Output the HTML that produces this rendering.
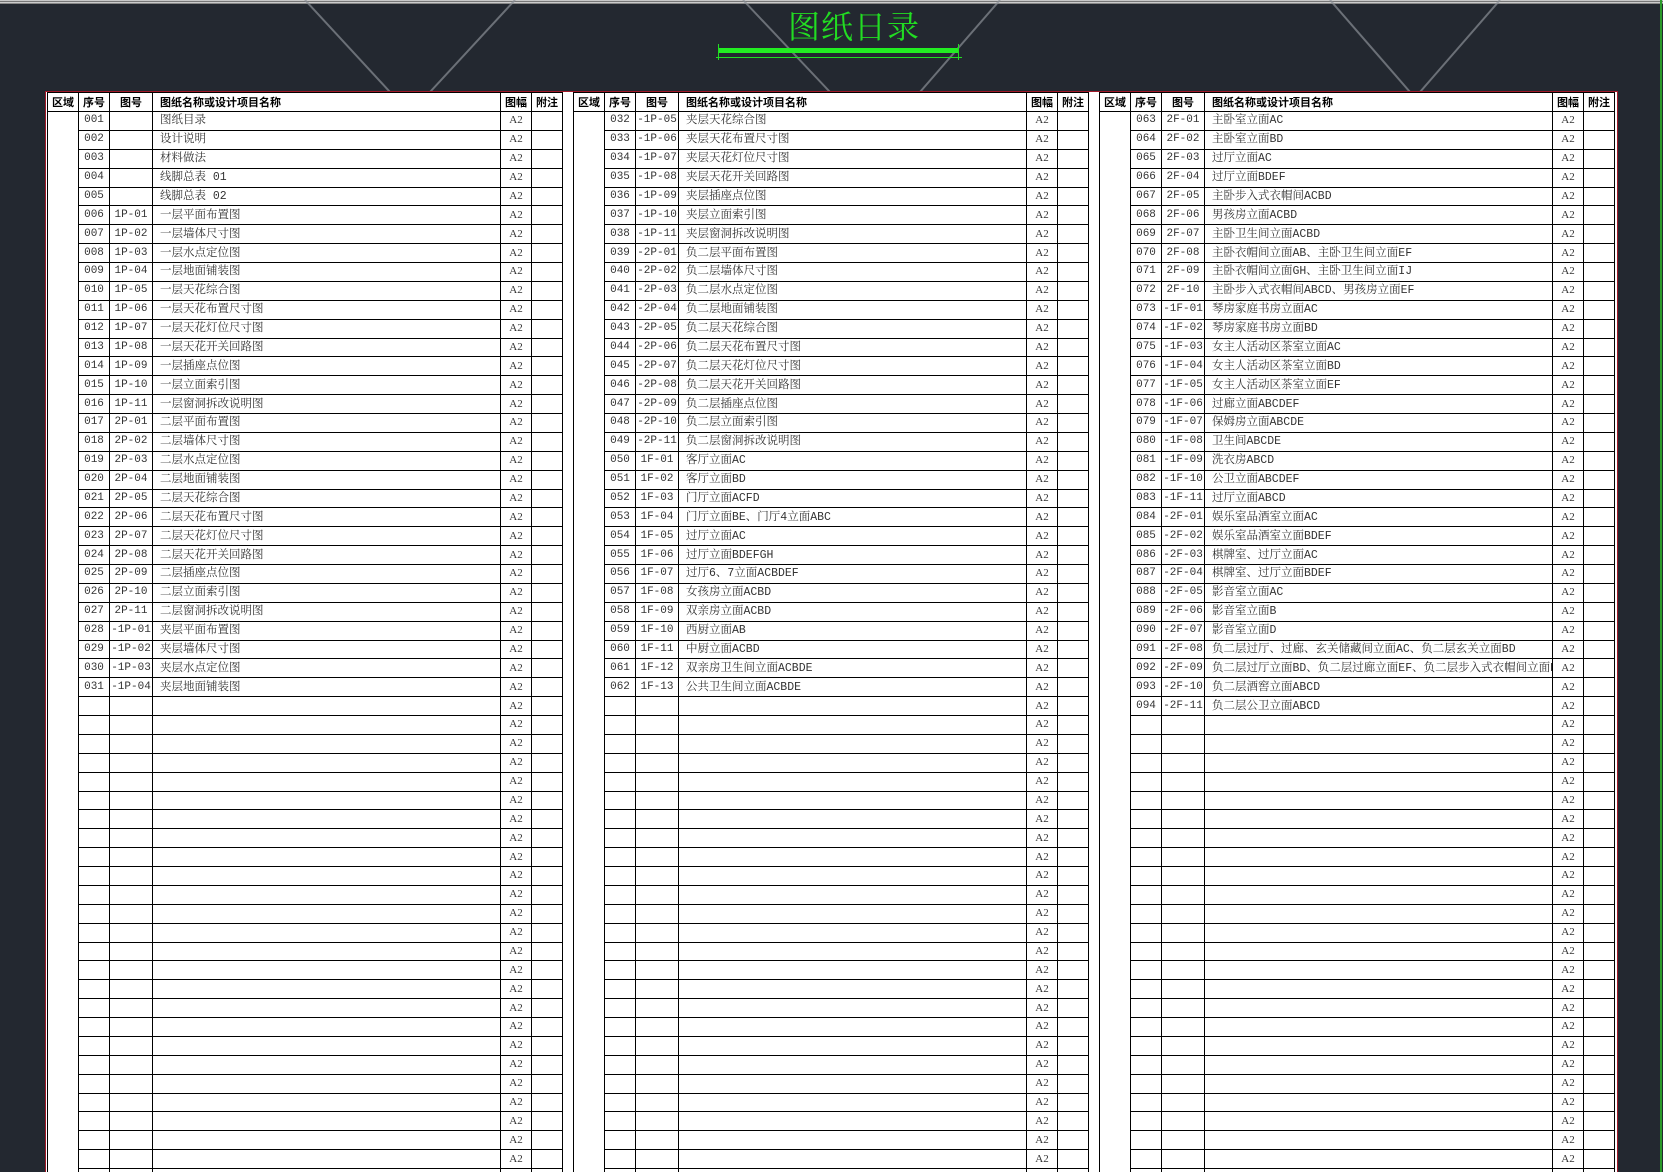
<!DOCTYPE html>
<html><head><meta charset="utf-8"><style>
html,body{margin:0;padding:0;width:1663px;height:1172px;overflow:hidden;background:#232830;}
body{position:relative;font-family:"Liberation Mono","Noto Serif CJK SC",monospace;}
.top{position:absolute;left:0;top:0;width:1663px;height:4px;background:linear-gradient(#c8c8c8 0,#c8c8c8 1px,#777 1px,#777 2px,#ccc 2px,#ccc 3px,#888 3px);}
.title{position:absolute;left:788px;top:2px;font-family:"Noto Serif CJK SC",serif;font-size:32px;color:#22dd22;letter-spacing:1px;}
.bar{position:absolute;left:718px;top:48px;width:240px;height:5px;background:#22ee22;}
.thin{position:absolute;left:716px;top:57px;width:246px;height:1px;background:#22dd22;}
.tick{position:absolute;top:44px;width:1px;height:16px;background:#22dd22;}
.green{position:absolute;left:1660px;top:0;width:2px;height:1172px;background:#2a9a2a;}
.clip{position:absolute;left:0;top:0;width:1663px;height:1172px;overflow:hidden;}
.page{position:absolute;left:45px;top:91px;width:1571px;height:1100px;background:#fff;border:1px solid #a01828;border-bottom:none;}
table{position:absolute;top:92px;border-collapse:collapse;table-layout:fixed;width:515px;font-size:11px;color:#333;}
td{border:1px solid #000;height:17.88px;padding:0;white-space:nowrap;overflow:hidden;line-height:17px;}
th{border:1px solid #000;height:18px;padding:0;font-family:"Noto Sans CJK SC",sans-serif;font-weight:bold;font-size:11px;color:#000;text-align:center;line-height:17px;}
th.n{text-align:left;padding-left:7px;}
td:nth-child(1){border-top:none;border-bottom:none;}
td:nth-child(2),td:nth-child(3){text-align:center;}
td:nth-child(4){padding-left:7px;text-align:left;font-family:"Liberation Mono","Noto Serif CJK SC",serif;font-size:11.5px;}
td:nth-child(5){text-align:center;font-family:"Liberation Serif",serif;}
</style></head><body>
<div class="clip">
<div class="top"></div>
<svg style="position:absolute;left:0;top:0" width="1663" height="92"><g stroke="#8a8f96" stroke-width="2" opacity="0.7"><line x1="305" y1="0" x2="390" y2="92"/><line x1="515" y1="0" x2="430" y2="92"/><line x1="743" y1="0" x2="830" y2="92"/><line x1="1000" y1="0" x2="920" y2="92"/><line x1="1330" y1="0" x2="1410" y2="92"/><line x1="1500" y1="0" x2="1420" y2="92"/></g></svg>
<div class="title">图纸日录</div>
<div class="bar"></div><div class="thin"></div><div class="tick" style="left:718px"></div><div class="tick" style="left:958px"></div>
<div class="green"></div>
<div class="page"></div>

<table style="left:47px"><colgroup><col style="width:31px"><col style="width:31px"><col style="width:43px"><col style="width:348px"><col style="width:31px"><col style="width:31px"></colgroup>
<tr><th>区域</th><th>序号</th><th>图号</th><th class="n">图纸名称或设计项目名称</th><th>图幅</th><th>附注</th></tr>
<tr><td></td><td>001</td><td></td><td>图纸目录</td><td>A2</td><td></td></tr>
<tr><td></td><td>002</td><td></td><td>设计说明</td><td>A2</td><td></td></tr>
<tr><td></td><td>003</td><td></td><td>材料做法</td><td>A2</td><td></td></tr>
<tr><td></td><td>004</td><td></td><td>线脚总表 01</td><td>A2</td><td></td></tr>
<tr><td></td><td>005</td><td></td><td>线脚总表 02</td><td>A2</td><td></td></tr>
<tr><td></td><td>006</td><td>1P-01</td><td>一层平面布置图</td><td>A2</td><td></td></tr>
<tr><td></td><td>007</td><td>1P-02</td><td>一层墙体尺寸图</td><td>A2</td><td></td></tr>
<tr><td></td><td>008</td><td>1P-03</td><td>一层水点定位图</td><td>A2</td><td></td></tr>
<tr><td></td><td>009</td><td>1P-04</td><td>一层地面铺装图</td><td>A2</td><td></td></tr>
<tr><td></td><td>010</td><td>1P-05</td><td>一层天花综合图</td><td>A2</td><td></td></tr>
<tr><td></td><td>011</td><td>1P-06</td><td>一层天花布置尺寸图</td><td>A2</td><td></td></tr>
<tr><td></td><td>012</td><td>1P-07</td><td>一层天花灯位尺寸图</td><td>A2</td><td></td></tr>
<tr><td></td><td>013</td><td>1P-08</td><td>一层天花开关回路图</td><td>A2</td><td></td></tr>
<tr><td></td><td>014</td><td>1P-09</td><td>一层插座点位图</td><td>A2</td><td></td></tr>
<tr><td></td><td>015</td><td>1P-10</td><td>一层立面索引图</td><td>A2</td><td></td></tr>
<tr><td></td><td>016</td><td>1P-11</td><td>一层窗洞拆改说明图</td><td>A2</td><td></td></tr>
<tr><td></td><td>017</td><td>2P-01</td><td>二层平面布置图</td><td>A2</td><td></td></tr>
<tr><td></td><td>018</td><td>2P-02</td><td>二层墙体尺寸图</td><td>A2</td><td></td></tr>
<tr><td></td><td>019</td><td>2P-03</td><td>二层水点定位图</td><td>A2</td><td></td></tr>
<tr><td></td><td>020</td><td>2P-04</td><td>二层地面铺装图</td><td>A2</td><td></td></tr>
<tr><td></td><td>021</td><td>2P-05</td><td>二层天花综合图</td><td>A2</td><td></td></tr>
<tr><td></td><td>022</td><td>2P-06</td><td>二层天花布置尺寸图</td><td>A2</td><td></td></tr>
<tr><td></td><td>023</td><td>2P-07</td><td>二层天花灯位尺寸图</td><td>A2</td><td></td></tr>
<tr><td></td><td>024</td><td>2P-08</td><td>二层天花开关回路图</td><td>A2</td><td></td></tr>
<tr><td></td><td>025</td><td>2P-09</td><td>二层插座点位图</td><td>A2</td><td></td></tr>
<tr><td></td><td>026</td><td>2P-10</td><td>二层立面索引图</td><td>A2</td><td></td></tr>
<tr><td></td><td>027</td><td>2P-11</td><td>二层窗洞拆改说明图</td><td>A2</td><td></td></tr>
<tr><td></td><td>028</td><td>-1P-01</td><td>夹层平面布置图</td><td>A2</td><td></td></tr>
<tr><td></td><td>029</td><td>-1P-02</td><td>夹层墙体尺寸图</td><td>A2</td><td></td></tr>
<tr><td></td><td>030</td><td>-1P-03</td><td>夹层水点定位图</td><td>A2</td><td></td></tr>
<tr><td></td><td>031</td><td>-1P-04</td><td>夹层地面铺装图</td><td>A2</td><td></td></tr>
<tr><td></td><td></td><td></td><td></td><td>A2</td><td></td></tr><tr><td></td><td></td><td></td><td></td><td>A2</td><td></td></tr><tr><td></td><td></td><td></td><td></td><td>A2</td><td></td></tr><tr><td></td><td></td><td></td><td></td><td>A2</td><td></td></tr><tr><td></td><td></td><td></td><td></td><td>A2</td><td></td></tr>
<tr><td></td><td></td><td></td><td></td><td>A2</td><td></td></tr><tr><td></td><td></td><td></td><td></td><td>A2</td><td></td></tr><tr><td></td><td></td><td></td><td></td><td>A2</td><td></td></tr><tr><td></td><td></td><td></td><td></td><td>A2</td><td></td></tr><tr><td></td><td></td><td></td><td></td><td>A2</td><td></td></tr>
<tr><td></td><td></td><td></td><td></td><td>A2</td><td></td></tr><tr><td></td><td></td><td></td><td></td><td>A2</td><td></td></tr><tr><td></td><td></td><td></td><td></td><td>A2</td><td></td></tr><tr><td></td><td></td><td></td><td></td><td>A2</td><td></td></tr><tr><td></td><td></td><td></td><td></td><td>A2</td><td></td></tr>
<tr><td></td><td></td><td></td><td></td><td>A2</td><td></td></tr><tr><td></td><td></td><td></td><td></td><td>A2</td><td></td></tr><tr><td></td><td></td><td></td><td></td><td>A2</td><td></td></tr><tr><td></td><td></td><td></td><td></td><td>A2</td><td></td></tr><tr><td></td><td></td><td></td><td></td><td>A2</td><td></td></tr>
<tr><td></td><td></td><td></td><td></td><td>A2</td><td></td></tr><tr><td></td><td></td><td></td><td></td><td>A2</td><td></td></tr><tr><td></td><td></td><td></td><td></td><td>A2</td><td></td></tr><tr><td></td><td></td><td></td><td></td><td>A2</td><td></td></tr><tr><td></td><td></td><td></td><td></td><td>A2</td><td></td></tr>
<tr><td></td><td></td><td></td><td></td><td>A2</td><td></td></tr><tr><td></td><td></td><td></td><td></td><td>A2</td><td></td></tr>
</table>

<table style="left:573px"><colgroup><col style="width:31px"><col style="width:31px"><col style="width:43px"><col style="width:348px"><col style="width:31px"><col style="width:31px"></colgroup>
<tr><th>区域</th><th>序号</th><th>图号</th><th class="n">图纸名称或设计项目名称</th><th>图幅</th><th>附注</th></tr>
<tr><td></td><td>032</td><td>-1P-05</td><td>夹层天花综合图</td><td>A2</td><td></td></tr>
<tr><td></td><td>033</td><td>-1P-06</td><td>夹层天花布置尺寸图</td><td>A2</td><td></td></tr>
<tr><td></td><td>034</td><td>-1P-07</td><td>夹层天花灯位尺寸图</td><td>A2</td><td></td></tr>
<tr><td></td><td>035</td><td>-1P-08</td><td>夹层天花开关回路图</td><td>A2</td><td></td></tr>
<tr><td></td><td>036</td><td>-1P-09</td><td>夹层插座点位图</td><td>A2</td><td></td></tr>
<tr><td></td><td>037</td><td>-1P-10</td><td>夹层立面索引图</td><td>A2</td><td></td></tr>
<tr><td></td><td>038</td><td>-1P-11</td><td>夹层窗洞拆改说明图</td><td>A2</td><td></td></tr>
<tr><td></td><td>039</td><td>-2P-01</td><td>负二层平面布置图</td><td>A2</td><td></td></tr>
<tr><td></td><td>040</td><td>-2P-02</td><td>负二层墙体尺寸图</td><td>A2</td><td></td></tr>
<tr><td></td><td>041</td><td>-2P-03</td><td>负二层水点定位图</td><td>A2</td><td></td></tr>
<tr><td></td><td>042</td><td>-2P-04</td><td>负二层地面铺装图</td><td>A2</td><td></td></tr>
<tr><td></td><td>043</td><td>-2P-05</td><td>负二层天花综合图</td><td>A2</td><td></td></tr>
<tr><td></td><td>044</td><td>-2P-06</td><td>负二层天花布置尺寸图</td><td>A2</td><td></td></tr>
<tr><td></td><td>045</td><td>-2P-07</td><td>负二层天花灯位尺寸图</td><td>A2</td><td></td></tr>
<tr><td></td><td>046</td><td>-2P-08</td><td>负二层天花开关回路图</td><td>A2</td><td></td></tr>
<tr><td></td><td>047</td><td>-2P-09</td><td>负二层插座点位图</td><td>A2</td><td></td></tr>
<tr><td></td><td>048</td><td>-2P-10</td><td>负二层立面索引图</td><td>A2</td><td></td></tr>
<tr><td></td><td>049</td><td>-2P-11</td><td>负二层窗洞拆改说明图</td><td>A2</td><td></td></tr>
<tr><td></td><td>050</td><td>1F-01</td><td>客厅立面AC</td><td>A2</td><td></td></tr>
<tr><td></td><td>051</td><td>1F-02</td><td>客厅立面BD</td><td>A2</td><td></td></tr>
<tr><td></td><td>052</td><td>1F-03</td><td>门厅立面ACFD</td><td>A2</td><td></td></tr>
<tr><td></td><td>053</td><td>1F-04</td><td>门厅立面BE、门厅4立面ABC</td><td>A2</td><td></td></tr>
<tr><td></td><td>054</td><td>1F-05</td><td>过厅立面AC</td><td>A2</td><td></td></tr>
<tr><td></td><td>055</td><td>1F-06</td><td>过厅立面BDEFGH</td><td>A2</td><td></td></tr>
<tr><td></td><td>056</td><td>1F-07</td><td>过厅6、7立面ACBDEF</td><td>A2</td><td></td></tr>
<tr><td></td><td>057</td><td>1F-08</td><td>女孩房立面ACBD</td><td>A2</td><td></td></tr>
<tr><td></td><td>058</td><td>1F-09</td><td>双亲房立面ACBD</td><td>A2</td><td></td></tr>
<tr><td></td><td>059</td><td>1F-10</td><td>西厨立面AB</td><td>A2</td><td></td></tr>
<tr><td></td><td>060</td><td>1F-11</td><td>中厨立面ACBD</td><td>A2</td><td></td></tr>
<tr><td></td><td>061</td><td>1F-12</td><td>双亲房卫生间立面ACBDE</td><td>A2</td><td></td></tr>
<tr><td></td><td>062</td><td>1F-13</td><td>公共卫生间立面ACBDE</td><td>A2</td><td></td></tr>
<tr><td></td><td></td><td></td><td></td><td>A2</td><td></td></tr><tr><td></td><td></td><td></td><td></td><td>A2</td><td></td></tr><tr><td></td><td></td><td></td><td></td><td>A2</td><td></td></tr><tr><td></td><td></td><td></td><td></td><td>A2</td><td></td></tr><tr><td></td><td></td><td></td><td></td><td>A2</td><td></td></tr>
<tr><td></td><td></td><td></td><td></td><td>A2</td><td></td></tr><tr><td></td><td></td><td></td><td></td><td>A2</td><td></td></tr><tr><td></td><td></td><td></td><td></td><td>A2</td><td></td></tr><tr><td></td><td></td><td></td><td></td><td>A2</td><td></td></tr><tr><td></td><td></td><td></td><td></td><td>A2</td><td></td></tr>
<tr><td></td><td></td><td></td><td></td><td>A2</td><td></td></tr><tr><td></td><td></td><td></td><td></td><td>A2</td><td></td></tr><tr><td></td><td></td><td></td><td></td><td>A2</td><td></td></tr><tr><td></td><td></td><td></td><td></td><td>A2</td><td></td></tr><tr><td></td><td></td><td></td><td></td><td>A2</td><td></td></tr>
<tr><td></td><td></td><td></td><td></td><td>A2</td><td></td></tr><tr><td></td><td></td><td></td><td></td><td>A2</td><td></td></tr><tr><td></td><td></td><td></td><td></td><td>A2</td><td></td></tr><tr><td></td><td></td><td></td><td></td><td>A2</td><td></td></tr><tr><td></td><td></td><td></td><td></td><td>A2</td><td></td></tr>
<tr><td></td><td></td><td></td><td></td><td>A2</td><td></td></tr><tr><td></td><td></td><td></td><td></td><td>A2</td><td></td></tr><tr><td></td><td></td><td></td><td></td><td>A2</td><td></td></tr><tr><td></td><td></td><td></td><td></td><td>A2</td><td></td></tr><tr><td></td><td></td><td></td><td></td><td>A2</td><td></td></tr>
<tr><td></td><td></td><td></td><td></td><td>A2</td><td></td></tr><tr><td></td><td></td><td></td><td></td><td>A2</td><td></td></tr>
</table>

<table style="left:1099px"><colgroup><col style="width:31px"><col style="width:31px"><col style="width:43px"><col style="width:348px"><col style="width:31px"><col style="width:31px"></colgroup>
<tr><th>区域</th><th>序号</th><th>图号</th><th class="n">图纸名称或设计项目名称</th><th>图幅</th><th>附注</th></tr>
<tr><td></td><td>063</td><td>2F-01</td><td>主卧室立面AC</td><td>A2</td><td></td></tr>
<tr><td></td><td>064</td><td>2F-02</td><td>主卧室立面BD</td><td>A2</td><td></td></tr>
<tr><td></td><td>065</td><td>2F-03</td><td>过厅立面AC</td><td>A2</td><td></td></tr>
<tr><td></td><td>066</td><td>2F-04</td><td>过厅立面BDEF</td><td>A2</td><td></td></tr>
<tr><td></td><td>067</td><td>2F-05</td><td>主卧步入式衣帽间ACBD</td><td>A2</td><td></td></tr>
<tr><td></td><td>068</td><td>2F-06</td><td>男孩房立面ACBD</td><td>A2</td><td></td></tr>
<tr><td></td><td>069</td><td>2F-07</td><td>主卧卫生间立面ACBD</td><td>A2</td><td></td></tr>
<tr><td></td><td>070</td><td>2F-08</td><td>主卧衣帽间立面AB、主卧卫生间立面EF</td><td>A2</td><td></td></tr>
<tr><td></td><td>071</td><td>2F-09</td><td>主卧衣帽间立面GH、主卧卫生间立面IJ</td><td>A2</td><td></td></tr>
<tr><td></td><td>072</td><td>2F-10</td><td>主卧步入式衣帽间ABCD、男孩房立面EF</td><td>A2</td><td></td></tr>
<tr><td></td><td>073</td><td>-1F-01</td><td>琴房家庭书房立面AC</td><td>A2</td><td></td></tr>
<tr><td></td><td>074</td><td>-1F-02</td><td>琴房家庭书房立面BD</td><td>A2</td><td></td></tr>
<tr><td></td><td>075</td><td>-1F-03</td><td>女主人活动区茶室立面AC</td><td>A2</td><td></td></tr>
<tr><td></td><td>076</td><td>-1F-04</td><td>女主人活动区茶室立面BD</td><td>A2</td><td></td></tr>
<tr><td></td><td>077</td><td>-1F-05</td><td>女主人活动区茶室立面EF</td><td>A2</td><td></td></tr>
<tr><td></td><td>078</td><td>-1F-06</td><td>过廊立面ABCDEF</td><td>A2</td><td></td></tr>
<tr><td></td><td>079</td><td>-1F-07</td><td>保姆房立面ABCDE</td><td>A2</td><td></td></tr>
<tr><td></td><td>080</td><td>-1F-08</td><td>卫生间ABCDE</td><td>A2</td><td></td></tr>
<tr><td></td><td>081</td><td>-1F-09</td><td>洗衣房ABCD</td><td>A2</td><td></td></tr>
<tr><td></td><td>082</td><td>-1F-10</td><td>公卫立面ABCDEF</td><td>A2</td><td></td></tr>
<tr><td></td><td>083</td><td>-1F-11</td><td>过厅立面ABCD</td><td>A2</td><td></td></tr>
<tr><td></td><td>084</td><td>-2F-01</td><td>娱乐室品酒室立面AC</td><td>A2</td><td></td></tr>
<tr><td></td><td>085</td><td>-2F-02</td><td>娱乐室品酒室立面BDEF</td><td>A2</td><td></td></tr>
<tr><td></td><td>086</td><td>-2F-03</td><td>棋牌室、过厅立面AC</td><td>A2</td><td></td></tr>
<tr><td></td><td>087</td><td>-2F-04</td><td>棋牌室、过厅立面BDEF</td><td>A2</td><td></td></tr>
<tr><td></td><td>088</td><td>-2F-05</td><td>影音室立面AC</td><td>A2</td><td></td></tr>
<tr><td></td><td>089</td><td>-2F-06</td><td>影音室立面B</td><td>A2</td><td></td></tr>
<tr><td></td><td>090</td><td>-2F-07</td><td>影音室立面D</td><td>A2</td><td></td></tr>
<tr><td></td><td>091</td><td>-2F-08</td><td>负二层过厅、过廊、玄关储藏间立面AC、负二层玄关立面BD</td><td>A2</td><td></td></tr>
<tr><td></td><td>092</td><td>-2F-09</td><td>负二层过厅立面BD、负二层过廊立面EF、负二层步入式衣帽间立面B</td><td>A2</td><td></td></tr>
<tr><td></td><td>093</td><td>-2F-10</td><td>负二层酒窖立面ABCD</td><td>A2</td><td></td></tr>
<tr><td></td><td>094</td><td>-2F-11</td><td>负二层公卫立面ABCD</td><td>A2</td><td></td></tr>
<tr><td></td><td></td><td></td><td></td><td>A2</td><td></td></tr><tr><td></td><td></td><td></td><td></td><td>A2</td><td></td></tr><tr><td></td><td></td><td></td><td></td><td>A2</td><td></td></tr><tr><td></td><td></td><td></td><td></td><td>A2</td><td></td></tr><tr><td></td><td></td><td></td><td></td><td>A2</td><td></td></tr>
<tr><td></td><td></td><td></td><td></td><td>A2</td><td></td></tr><tr><td></td><td></td><td></td><td></td><td>A2</td><td></td></tr><tr><td></td><td></td><td></td><td></td><td>A2</td><td></td></tr><tr><td></td><td></td><td></td><td></td><td>A2</td><td></td></tr><tr><td></td><td></td><td></td><td></td><td>A2</td><td></td></tr>
<tr><td></td><td></td><td></td><td></td><td>A2</td><td></td></tr><tr><td></td><td></td><td></td><td></td><td>A2</td><td></td></tr><tr><td></td><td></td><td></td><td></td><td>A2</td><td></td></tr><tr><td></td><td></td><td></td><td></td><td>A2</td><td></td></tr><tr><td></td><td></td><td></td><td></td><td>A2</td><td></td></tr>
<tr><td></td><td></td><td></td><td></td><td>A2</td><td></td></tr><tr><td></td><td></td><td></td><td></td><td>A2</td><td></td></tr><tr><td></td><td></td><td></td><td></td><td>A2</td><td></td></tr><tr><td></td><td></td><td></td><td></td><td>A2</td><td></td></tr><tr><td></td><td></td><td></td><td></td><td>A2</td><td></td></tr>
<tr><td></td><td></td><td></td><td></td><td>A2</td><td></td></tr><tr><td></td><td></td><td></td><td></td><td>A2</td><td></td></tr><tr><td></td><td></td><td></td><td></td><td>A2</td><td></td></tr><tr><td></td><td></td><td></td><td></td><td>A2</td><td></td></tr><tr><td></td><td></td><td></td><td></td><td>A2</td><td></td></tr>
<tr><td></td><td></td><td></td><td></td><td>A2</td><td></td></tr>
</table>
</div>
</body></html>
